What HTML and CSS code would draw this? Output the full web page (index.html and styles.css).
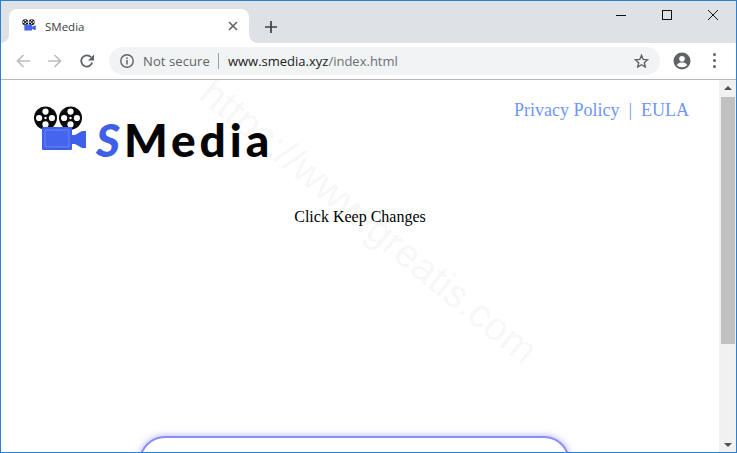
FILE: index.html
```html
<!DOCTYPE html>
<html lang="en">
<head>
<meta charset="utf-8">
<title>SMedia</title>
<link rel="stylesheet" href="styles.css">
</head>
<body>
<svg class="defs" width="0" height="0" aria-hidden="true">
  <symbol id="reel" viewBox="0 0 24 24">
    <circle cx="12" cy="12" r="11.5" fill="#0b0b0b"/>
    <circle cx="12" cy="5.6" r="3.1" fill="#fff"/>
    <circle cx="12" cy="18.4" r="3.1" fill="#fff"/>
    <circle cx="5.6" cy="12" r="3.1" fill="#fff"/>
    <circle cx="18.4" cy="12" r="3.1" fill="#fff"/>
    <circle cx="12" cy="12" r="1.2" fill="#fff"/>
  </symbol>
  <symbol id="camera" viewBox="0 0 54 46">
    <use href="#reel" x="0.5" y="0" width="24" height="24"/>
    <use href="#reel" x="25.5" y="0" width="24" height="24"/>
    <rect x="9" y="21" width="30" height="23" rx="1" fill="#3e5fe8"/>
    <rect x="12" y="24" width="24" height="17" fill="#4565ee" stroke="#8ea2f5" stroke-width="0.8" stroke-dasharray="1.5 0.6"/>
    <path d="M39 29H42L49 25H53V42H49L42 38H39Z" fill="#3e5fe8"/>
  </symbol>
</svg>
<div class="window">
  <header class="tabstrip">
    <div class="tab">
      <svg class="favicon" width="14" height="12"><use href="#camera"/></svg>
      <span class="tab-title">SMedia</span>
      <svg class="tab-close" width="10" height="10" viewBox="0 0 10 10"><path d="M1 1L9 9M9 1L1 9" stroke="#5f6368" stroke-width="1.6"/></svg>
    </div>
    <svg class="new-tab" width="12" height="12" viewBox="0 0 12 12"><path d="M6 0V12M0 6H12" stroke="#3c4043" stroke-width="1.7"/></svg>
    <div class="win-controls">
      <svg width="10" height="10" viewBox="0 0 10 10"><path d="M0 5.5H10" stroke="#111" stroke-width="1"/></svg>
      <svg width="10" height="10" viewBox="0 0 10 10"><rect x="0.5" y="0.5" width="9" height="9" fill="none" stroke="#111"/></svg>
      <svg width="10" height="10" viewBox="0 0 10 10"><path d="M0 0L10 10M10 0L0 10" stroke="#111" stroke-width="1"/></svg>
    </div>
  </header>
  <nav class="toolbar">
    <div class="nav-buttons">
      <svg width="14" height="14" viewBox="0 0 14 14"><path d="M14 7H1.5M7.5 1L1.5 7L7.5 13" fill="none" stroke="#babdc1" stroke-width="1.7"/></svg>
      <svg width="14" height="14" viewBox="0 0 14 14"><path d="M0 7H12.5M6.5 1L12.5 7L6.5 13" fill="none" stroke="#babdc1" stroke-width="1.7"/></svg>
      <svg width="14" height="14" viewBox="0 0 14 14"><path d="M12.2 8.6A5.6 5.6 0 1 1 11 3.2" fill="none" stroke="#5f6368" stroke-width="1.8"/><path d="M14 0.4V6.4H8Z" fill="#5f6368"/></svg>
    </div>
    <div class="omnibox">
      <svg class="info" width="14" height="14" viewBox="0 0 14 14"><circle cx="7" cy="7" r="6.2" fill="none" stroke="#5f6368" stroke-width="1.4"/><path d="M7 6V10.5M7 3.4V5" stroke="#5f6368" stroke-width="1.5"/></svg>
      <span class="not-secure">Not secure</span>
      <span class="sep"></span>
      <span class="url"><span class="host">www.smedia.xyz</span>/index.html</span>
      <svg class="star" width="15" height="14" viewBox="0 0 15 14"><path d="M7.5 1.3L9.2 5.4L13.7 5.8L10.3 8.7L11.3 13L7.5 10.7L3.7 13L4.7 8.7L1.3 5.8L5.8 5.4Z" fill="none" stroke="#5f6368" stroke-width="1.4"/></svg>
    </div>
    <svg class="avatar" width="18" height="18" viewBox="0 0 18 18"><circle cx="9" cy="9" r="8.5" fill="#5f6368"/><circle cx="9" cy="6.8" r="2.8" fill="#fff"/><path d="M3.8 13C5 10.900 7 10.500 9 10.500S13 10.900 14.200 13C13 14.500 11 15.200 9 15.200S5 14.500 3.800 13Z" fill="#fff"/></svg>
    <div class="kebab"><i></i><i></i><i></i></div>
  </nav>
  <div class="viewport">
    <main class="page">
      <div class="page-head">
        <div class="logo">
          <svg class="logo-icon" width="54" height="46"><use href="#camera"/></svg>
          <span class="logo-text"><span class="logo-s">S</span>Media</span>
        </div>
        <div class="links"><a href="#">Privacy Policy</a><span class="pipe">|</span><a href="#">EULA</a></div>
      </div>
      <p class="message">Click Keep Changes</p>
      <div class="card"></div>
      <div class="watermark">https://www.greatis.com</div>
    </main>
    <aside class="scrollbar">
      <span class="arrow-up"></span>
      <span class="thumb"></span>
      <span class="arrow-down"></span>
    </aside>
  </div>
</div>
</body>
</html>
```
FILE: styles.css
```css
* { box-sizing: border-box; }
html, body { margin: 0; height: 100%; overflow: hidden; background: #fff; }
.defs { position: absolute; }
.window {
  width: 737px; height: 453px;
  border: 1px solid #2b80d2;
  display: flex; flex-direction: column;
  overflow: hidden;
}
.tabstrip {
  height: 42px; flex: none;
  background: #dee1e6;
  display: flex; align-items: flex-start;
  padding: 8px 0 0 8px;
}
.tab {
  position: relative;
  width: 240px; height: 34px;
  background: #fff;
  border-radius: 8px 8px 0 0;
  display: flex; align-items: center;
  padding: 0 11px 0 13px;
}
.tab::before, .tab::after {
  content: ""; position: absolute; bottom: 0;
  width: 8px; height: 8px;
}
.tab::before { left: -8px; background: radial-gradient(circle at 0 0, transparent 7.5px, #fff 8px); }
.tab::after { right: -8px; background: radial-gradient(circle at 100% 0, transparent 7.5px, #fff 8px); }
.favicon { flex: none; margin-top: -3px; }
.tab-title {
  margin-left: 9px; flex: 1;
  font: 11.5px "Open Sans", sans-serif;
  color: #3c4043;
}
.tab-close { flex: none; }
.new-tab { margin: 12px 0 0 16px; flex: none; }
.win-controls {
  margin: 1px 18px 0 auto;
  display: flex; gap: 36px;
}
.toolbar {
  height: 37px; flex: none;
  background: #fff;
  border-bottom: 1px solid #b5b7b9;
  display: flex; align-items: center;
  padding: 0 13px 1px 15px;
}
.nav-buttons { display: flex; gap: 18px; flex: none; }
.omnibox {
  margin-left: 15px;
  width: 551px; height: 28px;
  background: #f1f3f4;
  border-radius: 14px;
  display: flex; align-items: center;
  padding: 0 11px;
  font: 13px "Open Sans", sans-serif;
}
.info { flex: none; }
.not-secure { margin-left: 9px; color: #5f6368; letter-spacing: .1px; }
.sep { width: 1px; height: 16px; background: #9aa0a6; margin: 0 9px 0 8px; }
.url { color: #6b7075; flex: 1; }
.host { color: #202124; }
.star { flex: none; }
.avatar { margin-left: 13px; flex: none; }
.kebab {
  margin-left: 22px;
  display: flex; flex-direction: column; gap: 3px;
}
.kebab i { width: 3px; height: 3px; border-radius: 50%; background: #5f6368; }
.viewport { flex: 1; display: flex; min-height: 0; }
.page {
  position: relative;
  flex: 1; min-width: 0;
  overflow: hidden;
  background: #fff;
  font-family: "Liberation Serif", serif;
  display: flex; flex-direction: column;
}
.page-head {
  display: flex; justify-content: space-between; align-items: flex-start;
  padding: 26px 30px 0 32px;
}
.logo { display: flex; align-items: flex-start; }
.logo-icon { flex: none; }
.logo-text {
  margin: 0 0 0 9px;
  font: 900 46px/1 "Lato", sans-serif;
  letter-spacing: 4px;
  color: #050505;
  padding-top: 11px;
}
.logo-s { color: #3e5fe8; font-style: italic; }
.links { font-size: 18px; color: #6f97f5; margin-top: -6px; white-space: nowrap; }
.links a { color: inherit; text-decoration: none; }
.pipe { margin: 0 9px; }
.message {
  margin: 45px 0 0;
  text-align: center;
  font-size: 16px; line-height: 18px;
  color: #000;
}
.card {
  flex: none;
  margin: 210px 149px 0 138px;
  height: 60px;
  border: 2px solid #8c8cff;
  border-radius: 26px;
  box-shadow: 0 0 6px 1px rgba(130,130,255,.5);
  background: #fff;
}
.watermark {
  position: absolute; left: 157px; top: 121px;
  width: max-content;
  transform: rotate(39.5deg);
  font: 40px/1 "Liberation Sans", sans-serif;
  color: rgba(0,0,0,.05);
  white-space: nowrap;
  pointer-events: none;
}
.scrollbar {
  width: 17px; flex: none;
  background: #f1f1f1;
  position: relative;
  display: flex; flex-direction: column; align-items: center;
  padding-top: 17px;
}
.thumb { width: 14px; height: 247px; background: #c1c1c1; margin-left: 1px; }
.arrow-up, .arrow-down {
  position: absolute; left: 5px;
  width: 0; height: 0;
  border-left: 4px solid transparent; border-right: 4px solid transparent;
}
.arrow-up { top: 6px; border-bottom: 4px solid #505050; }
.arrow-down { bottom: 5px; border-top: 4px solid #505050; }
```
